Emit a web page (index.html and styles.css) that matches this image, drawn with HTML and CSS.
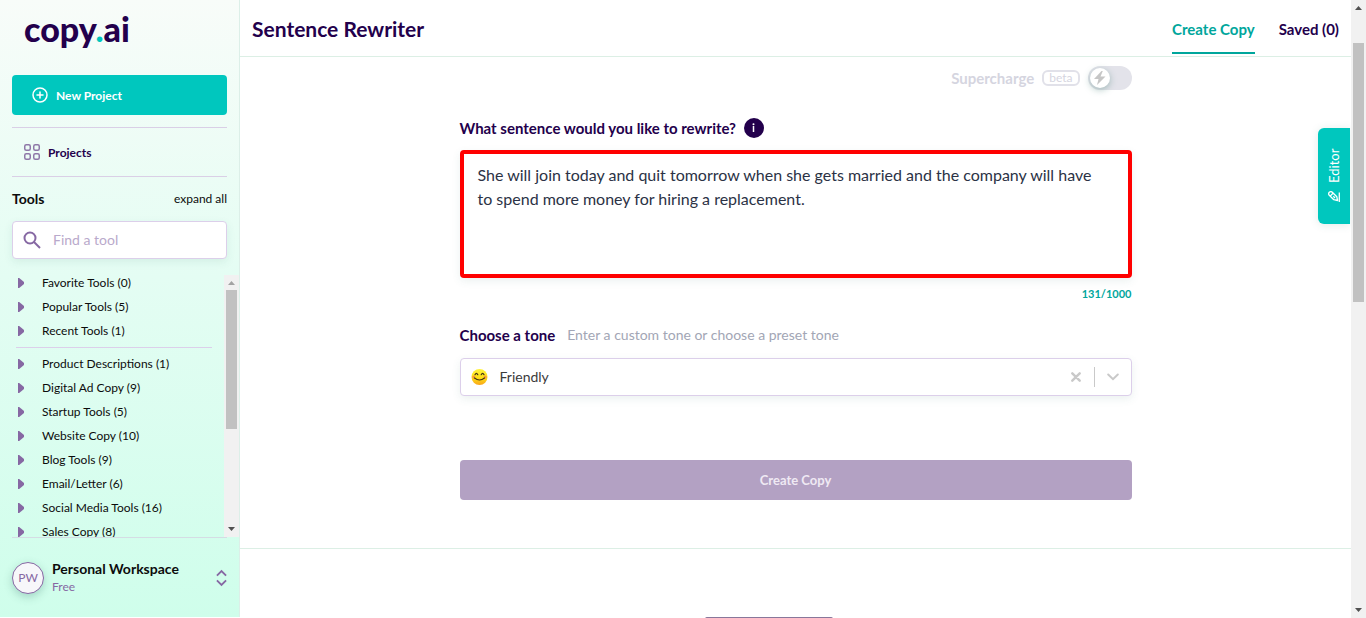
FILE: index.html
```html
<!DOCTYPE html>
<html lang="en">
<head>
<meta charset="utf-8">
<title>Sentence Rewriter</title>
<link rel="stylesheet" href="styles.css">
</head>
<body>
<div class="app">
  <aside class="sidebar">
    <a class="logo" href="#">copy<span class="logo-dot">.</span>ai</a>
    <button class="new-project" type="button">
      <svg width="16" height="16" viewBox="0 0 16 16" fill="none" stroke="currentColor" stroke-width="1.5" stroke-linecap="round"><circle cx="8" cy="8" r="7"/><path d="M8 5v6M5 8h6"/></svg>
      New Project
    </button>
    <nav class="projects">
      <a class="projects-link" href="#">
        <svg width="16" height="16" viewBox="0 0 16 16" fill="none" stroke="#8f78a8" stroke-width="1.5"><rect x=".75" y=".75" width="5.5" height="5.5" rx="1.5"/><rect x="9.75" y=".75" width="5.5" height="5.5" rx="1.5"/><rect x=".75" y="9.75" width="5.5" height="5.5" rx="1.5"/><rect x="9.75" y="9.75" width="5.5" height="5.5" rx="1.5"/></svg>
        Projects
      </a>
    </nav>
    <div class="tools-head">
      <h2 class="tools-title">Tools</h2>
      <button class="expand" type="button">expand all</button>
    </div>
    <label class="search">
      <svg width="18" height="18" viewBox="0 0 18 18" fill="none" stroke="#8668a3" stroke-width="2"><circle cx="7" cy="7" r="5.5"/><path d="M11 11l6 6"/></svg>
      <input class="search-input" type="text" placeholder="Find a tool" aria-label="Find a tool">
    </label>
    <div class="tools">
      <ul class="tool-list">
        <li><button class="tool" type="button">Favorite Tools (0)</button></li>
        <li><button class="tool" type="button">Popular Tools (5)</button></li>
        <li><button class="tool" type="button">Recent Tools (1)</button></li>
        <li class="tool-divider" role="separator"></li>
        <li><button class="tool" type="button">Product Descriptions (1)</button></li>
        <li><button class="tool" type="button">Digital Ad Copy (9)</button></li>
        <li><button class="tool" type="button">Startup Tools (5)</button></li>
        <li><button class="tool" type="button">Website Copy (10)</button></li>
        <li><button class="tool" type="button">Blog Tools (9)</button></li>
        <li><button class="tool" type="button">Email/Letter (6)</button></li>
        <li><button class="tool" type="button">Social Media Tools (16)</button></li>
        <li><button class="tool" type="button">Sales Copy (8)</button></li>
      </ul>
      <div class="scrollbar">
        <span class="arrow arrow-up arrow-muted"></span>
        <div class="track"><div class="thumb thumb-tools"></div></div>
        <span class="arrow arrow-down"></span>
      </div>
    </div>
    <button class="workspace" type="button">
      <span class="avatar">PW</span>
      <span class="workspace-text"><span class="workspace-name">Personal Workspace</span><span class="workspace-plan">Free</span></span>
      <svg width="11" height="18" viewBox="0 0 12 18" fill="none" stroke="#8668a3" stroke-width="2"><path d="M1 6.500l5-5 5 5M1 11.500l5 5 5-5"/></svg>
    </button>
  </aside>

  <main class="main">
    <header class="topbar">
      <h1 class="title">Sentence Rewriter</h1>
      <nav class="tabs">
        <a class="tab tab-active" href="#">Create Copy</a>
        <a class="tab" href="#">Saved (0)</a>
      </nav>
    </header>
    <form class="form">
      <label class="supercharge">
        <span>Supercharge</span>
        <span class="beta">beta</span>
        <span class="switch">
          <input class="switch-input" type="checkbox" disabled>
          <span class="knob"><svg width="12" height="14" viewBox="0 0 12 14" fill="#c6c6c6"><path d="M7.500 0L0 8h4.500L3 14l8.500-8.500H6.500L8.800 0z"/></svg></span>
        </span>
      </label>
      <div class="field-head">
        <label class="label" for="sentence">What sentence would you like to rewrite?</label>
        <button class="info" type="button" aria-label="Info"><svg width="20" height="20" viewBox="0 0 20 20"><circle cx="10" cy="10" r="10" fill="#23004c"/><circle cx="9.500" cy="6.200" r="1" fill="#fff"/><path d="M9.500 8v6" stroke="#fff" stroke-width="1.500"/></svg></button>
      </div>
      <textarea class="sentence" id="sentence">She will join today and quit tomorrow when she gets married and the company will have to spend more money for hiring a replacement.</textarea>
      <div class="count">131/1000</div>
      <div class="tone-head">
        <label class="label" for="tone">Choose a tone</label>
        <span class="hint">Enter a custom tone or choose a preset tone</span>
      </div>
      <div class="tone">
        <svg class="emoji" width="17" height="17" viewBox="0 0 17 17"><defs><linearGradient id="face" x2="0" y2="1"><stop stop-color="#fff33f"/><stop offset=".55" stop-color="#fddf13"/><stop offset="1" stop-color="#f9a51b"/></linearGradient></defs><circle cx="8.500" cy="8" r="8" fill="url(#face)"/><circle cx="2.800" cy="8" r="1.600" fill="#f79a3a"/><circle cx="14.200" cy="8" r="1.600" fill="#f79a3a"/><path d="M4 5.700q1.400-2.800 2.800 0M10.200 5.700q1.400-2.800 2.800 0M3.500 9q5 4 10 0" fill="none" stroke="#413215" stroke-width="1.200" stroke-linecap="round"/></svg>
        <select class="tone-select" id="tone"><option>Friendly</option></select>
        <button class="clear" type="button" aria-label="Clear"><svg width="10" height="10" viewBox="0 0 10 10" stroke="#c9c9c9" stroke-width="2.400" stroke-linecap="round"><path d="M1.300 1.300l7.400 7.400M8.700 1.300L1.300 8.700"/></svg></button>
        <span class="tone-rule"></span>
        <svg class="chevron" width="12" height="8" viewBox="0 0 12 8" fill="none" stroke="#c9c9c9" stroke-width="2" stroke-linecap="round"><path d="M1.200 1.500L6 6.200l4.800-4.700"/></svg>
      </div>
      <button class="submit" type="submit">Create Copy</button>
    </form>
    <section class="results"><div class="illustration"></div></section>
    <button class="editor" type="button">
      <svg width="12" height="12" viewBox="0 0 12 12" fill="none" stroke="#fff" stroke-width="1.300" stroke-linejoin="round"><path d="M1.300 1.300Q3 0 4.300 1.300L8.800 5.800 9.600 9.500 5.800 8.700 1.300 4.300Q0 2.800 1.300 1.300zM2.200 5.100L5 2.200M5.300 5.300L7 7M11.300 1.500v9.500"/></svg>
      Editor
    </button>
  </main>
  <div class="scrollbar">
    <span class="arrow arrow-up"></span>
    <div class="track"><div class="thumb thumb-page"></div></div>
    <span class="arrow arrow-down"></span>
  </div>
</div>
</body>
</html>
```
FILE: styles.css
```css
* { box-sizing: border-box; }
body { margin: 0; font-family: Lato, "Open Sans", sans-serif; color: #0c0c0c; background: #fff; }
button, input, textarea, select { font: inherit; color: inherit; margin: 0; }
button { border: 0; padding: 0; background: none; text-align: left; }
a { color: inherit; text-decoration: none; }
h1, h2, ul { margin: 0; padding: 0; }
ul { list-style: none; }
svg { flex: none; display: block; }

.app { display: flex; height: 100vh; overflow: hidden; }

.sidebar { display: flex; flex-direction: column; flex: none; width: 240px; margin-bottom: 1px; padding: 0 12px; border-right: 1px solid #dcefe8; background: linear-gradient(#f8fcf9, #e4fdf3 45%, #cffeeb); }
.logo { flex: none; height: 75px; padding: 7px 12px 0; font-size: 34px; line-height: 44px; font-weight: 900; color: #23004c; }
.logo-dot { color: #00c7be; }
.new-project { display: flex; flex: none; align-items: center; gap: 8px; height: 40px; padding: 0 20px; border-radius: 4px; background: #00c7be; color: #fff; font-size: 12px; font-weight: 700; }
.projects { margin-top: 12px; border: solid #dacfe6; border-width: 1px 0; }
.projects-link { display: flex; align-items: center; gap: 8px; height: 48px; padding: 0 12px; font-size: 12px; font-weight: 700; color: #23004c; }
.tools-head { display: flex; flex: none; align-items: center; justify-content: space-between; height: 44px; padding-bottom: 2px; }
.tools-title { font-size: 14px; font-weight: 700; }
.expand { font-size: 12px; }
.search { display: flex; flex: none; align-items: center; gap: 12px; height: 38px; padding: 0 10px; border: 1px solid #dccfea; border-radius: 4px; background: #fff; box-shadow: 0 3px 8px rgba(60, 120, 110, 0.1); }
.search-input { flex: 1; min-width: 0; height: 36px; padding: 0 0 2px; border: 0; outline: 0; background: none; font-size: 14px; }
.search-input::placeholder { color: #b9a9cb; }
.tools { display: flex; flex: 1; min-height: 0; margin: 16px -12px 0 0; }
.tool-list { flex: 1; min-height: 0; padding: 0 12px 0 4px; overflow: hidden; }
.tool { display: flex; align-items: center; gap: 18px; height: 16px; margin-bottom: 8px; padding-left: 2px; font-size: 12px; line-height: 16px; }
.tool::before { content: ""; width: 6px; height: 10px; background: #8668a3; clip-path: polygon(0 0, 20% 0, 100% 40%, 100% 60%, 20% 100%, 0 100%); }
.tool-divider { height: 1px; margin-bottom: 8px; background: #dccfea; }
.workspace { display: flex; flex: none; align-items: center; gap: 8px; height: 80px; border-top: 1px solid #d5dce4; }
.avatar { display: flex; flex: none; align-items: center; justify-content: center; width: 32px; height: 32px; border: 1px solid #8668a3; border-radius: 50%; background: #f7f7fa; color: #8668a3; font-size: 12px; box-shadow: 0 3px 8px rgba(60, 120, 110, 0.3); }
.workspace-text { display: flex; flex: 1; flex-direction: column; padding-bottom: 2px; }
.workspace-name { font-size: 14px; line-height: 20px; font-weight: 700; }
.workspace-plan { font-size: 12px; line-height: 16px; color: #8668a3; }

.main { position: relative; display: flex; flex: 1; flex-direction: column; min-width: 0; overflow: hidden; }
.topbar { display: flex; flex: none; justify-content: space-between; height: 57px; padding: 0 12px; border-bottom: 1px solid #dcefe5; color: #23004c; }
.title { font-size: 21px; line-height: 58px; font-weight: 700; }
.tabs { display: flex; gap: 24px; font-size: 15px; font-weight: 700; }
.tab { height: 54px; line-height: 58px; }
.tab-active { color: #00a69c; border-bottom: 2px solid #00a69c; }

.form { display: flex; flex: none; flex-direction: column; align-self: center; width: 100%; max-width: 672px; padding: 9px 0 48px; }
.supercharge { display: flex; align-items: center; align-self: flex-end; gap: 8px; height: 24px; color: #d5d5df; font-size: 15px; line-height: 20px; font-weight: 700; }
.beta { padding: 0 5px; border: 2px solid #e1e1e9; border-radius: 6px; font-size: 12px; line-height: 12px; font-weight: 400; }
.switch { position: relative; display: block; width: 44px; height: 24px; border-radius: 12px; background: #e3e3ea; }
.switch-input { display: block; width: 100%; height: 100%; margin: 0; opacity: 0; }
.knob { position: absolute; top: 2px; left: 2px; display: flex; align-items: center; justify-content: center; width: 20px; height: 20px; border-radius: 50%; background: #fff; box-shadow: 0 2px 7px rgba(60, 120, 110, 0.4); }
.field-head { display: flex; align-items: center; gap: 8px; height: 20px; margin: 28px 0 12px; }
.label { color: #23004c; font-size: 15px; line-height: 20px; font-weight: 700; }
.sentence { display: block; width: 100%; height: 128px; padding: 9px 24px 9px 14px; border: 4px solid #f00; border-radius: 4px; outline: 0; resize: none; background: #fff; color: #2b3245; font-size: 16px; line-height: 24px; box-shadow: 0 3px 8px rgba(60, 120, 110, 0.1); }
.count { margin-top: 8px; text-align: right; color: #00a69c; font-size: 11px; line-height: 16px; font-weight: 700; }
.tone-head { display: flex; align-items: center; gap: 12px; margin: 23px 0 13px; }
.hint { color: #a2a6b5; font-size: 14px; line-height: 20px; }
.tone { display: flex; align-items: center; height: 38px; padding: 0 12px 0 10px; border: 1px solid #dccfea; border-radius: 4px; background: #fff; box-shadow: 0 3px 8px rgba(60, 120, 110, 0.1); }
.tone-select { flex: 1; appearance: none; height: 36px; padding: 0 12px 2px; border: 0; outline: 0; background: none; color: #3b3b3b; font-size: 14px; }
.tone-rule { width: 1px; height: 20px; margin: 0 12px 0 13px; background: #c9c9c9; }
.submit { height: 40px; margin-top: 64px; border-radius: 4px; background: #b3a1c3; color: #efe9f3; font-size: 13px; font-weight: 700; text-align: center; }
.results { flex: 1; min-height: 0; padding: 68px 53px 0 0; border-top: 1px solid #dcefe5; overflow: hidden; }
.illustration { width: 128px; height: 80px; margin: 0 auto; border-radius: 2px; background: #88779a; }
.editor { position: absolute; top: 128px; right: 1px; display: flex; align-items: center; justify-content: center; gap: 8px; width: 32px; height: 96px; border-radius: 0 6px 6px 0; background: #00c7be; color: #fff; font-size: 13px; writing-mode: vertical-rl; transform: rotate(180deg); box-shadow: 0 -1px 8px rgba(60, 120, 110, 0.15); }
.editor svg { transform: rotate(180deg); }

.scrollbar { display: flex; flex: none; flex-direction: column; width: 15px; background: #f1f1f1; }
.arrow { flex: none; height: 15px; background: #505050; }
.arrow-up { clip-path: polygon(50% 6px, 11px 10px, 4px 10px); }
.arrow-down { clip-path: polygon(4px 5px, 11px 5px, 50% 9px); }
.arrow-muted { background: #a3a3a3; }
.track { flex: 1; min-height: 0; padding: 0 2px; }
.thumb { background: #c1c1c1; }
.thumb-tools { height: 60%; }
.thumb-page { height: 44%; margin-top: 28px; }
```
